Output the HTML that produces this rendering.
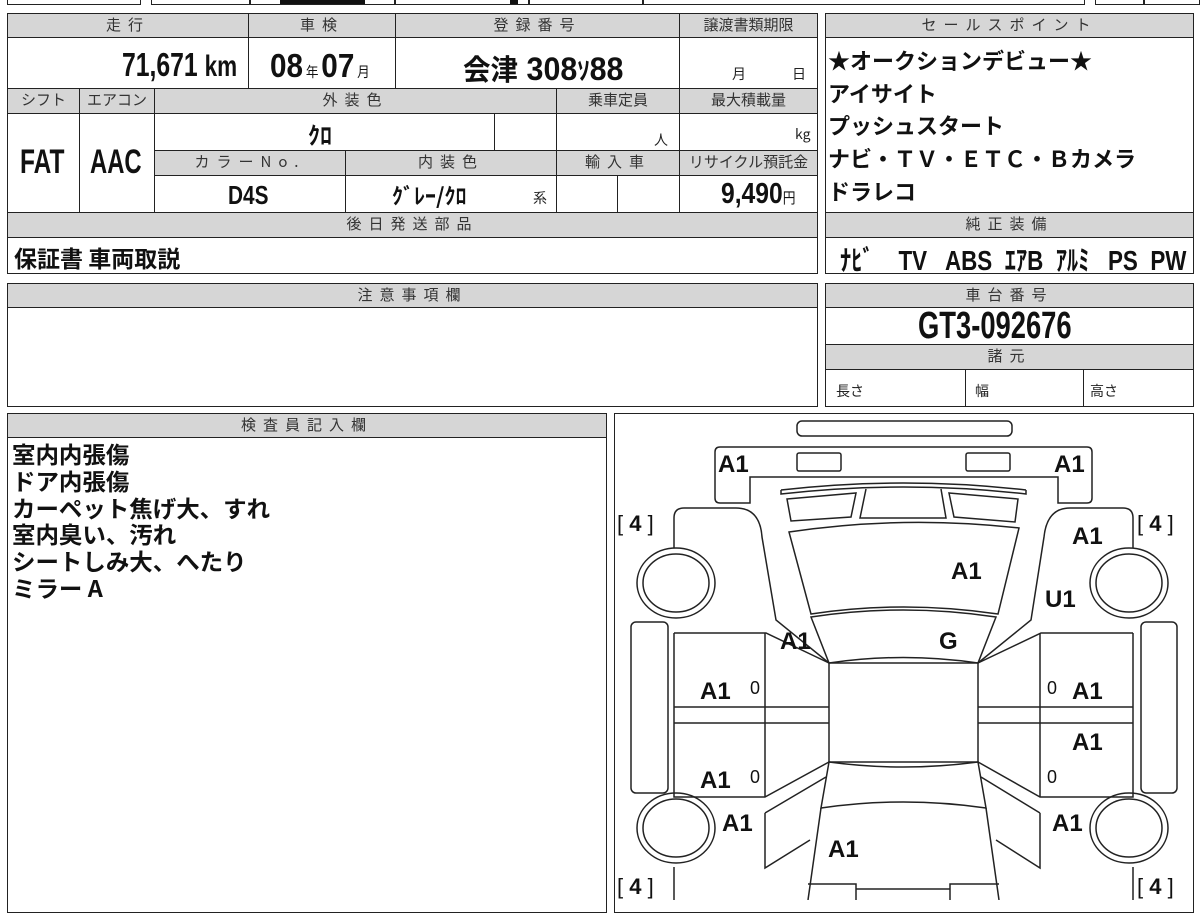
<!DOCTYPE html>
<html><head><meta charset="utf-8"><style>
*{margin:0;padding:0;box-sizing:border-box}
body{width:1200px;height:900px;background:#fff;position:relative;overflow:hidden;font-family:"Liberation Sans","Noto Sans CJK JP",sans-serif;color:#111}
.c{position:absolute;border:1.5px solid #222;}
.h{position:absolute;background:#d6d6d6;border:1.5px solid #222;font-size:15px;color:#333;text-align:center;letter-spacing:7px;line-height:22px;font-family:"Noto Sans CJK JP",sans-serif}
.v{position:absolute;font-weight:bold;font-family:"Liberation Sans","Noto Sans CJK JP",sans-serif;color:#111;white-space:nowrap;transform-origin:left top}
.j{position:absolute;font-weight:bold;font-family:"Noto Sans CJK JP",sans-serif;color:#111}
.s{position:absolute;font-size:14px;font-family:"Noto Sans CJK JP",sans-serif;color:#222}
</style></head><body>
<div class="c" style="left:7px;top:-6px;width:134px;height:11px"></div>
<div class="c" style="left:151px;top:-6px;width:934px;height:11px"></div>
<div style="position:absolute;left:249px;top:0;width:1.5px;height:5px;background:#222"></div>
<div style="position:absolute;left:394px;top:0;width:1.5px;height:5px;background:#222"></div>
<div style="position:absolute;left:528px;top:0;width:1.5px;height:5px;background:#222"></div>
<div style="position:absolute;left:642px;top:0;width:1.5px;height:5px;background:#222"></div>
<div style="position:absolute;left:280px;top:0;width:85px;height:4px;background:#111"></div>
<div style="position:absolute;left:510px;top:0;width:8px;height:4px;background:#111"></div>
<div class="c" style="left:1095px;top:-6px;width:105px;height:11px"></div>
<div style="position:absolute;left:1143px;top:0;width:1.5px;height:5px;background:#222"></div>

<div class="c" style="left:7px;top:13px;width:811px;height:261px"></div>
<div class="h" style="left:7px;top:13px;width:242px;height:25px">走行</div>
<div class="h" style="left:248px;top:13px;width:148px;height:25px">車検</div>
<div class="h" style="left:395px;top:13px;width:285px;height:25px">登録番号</div>
<div class="h" style="left:679px;top:13px;width:139px;height:25px;letter-spacing:0">譲渡書類期限</div>
<div class="c" style="left:248px;top:37px;width:148px;height:52px"></div>
<div class="c" style="left:395px;top:37px;width:285px;height:52px"></div>
<div class="v" style="left:122px;top:46px;font-size:33px;transform:scaleX(0.75)">71,671 <span style="font-size:30px">km</span></div>
<div class="v" style="left:270px;top:47px;font-size:33px;transform:scaleX(0.9)">08<span style="font-size:14px;font-weight:normal;font-family:'Noto Sans CJK JP'"> 年 </span>07<span style="font-size:14px;font-weight:normal;font-family:'Noto Sans CJK JP'"> 月</span></div>
<div class="v" style="left:463px;top:47px;font-size:32px;transform:scaleX(0.95)"><span style="font-size:29px;font-family:'Noto Sans CJK JP'">会津</span> 308<span style="font-size:26px">ｿ</span>88</div>
<div class="s" style="left:732px;top:64px">月</div><div class="s" style="left:792px;top:64px">日</div>

<div class="h" style="left:7px;top:88px;width:73px;height:26px;letter-spacing:0">シフト</div>
<div class="h" style="left:79px;top:88px;width:76px;height:26px;letter-spacing:0">エアコン</div>
<div class="h" style="left:154px;top:88px;width:403px;height:26px">外装色</div>
<div class="h" style="left:556px;top:88px;width:124px;height:26px;letter-spacing:0">乗車定員</div>
<div class="h" style="left:679px;top:88px;width:139px;height:26px;letter-spacing:0">最大積載量</div>
<div class="c" style="left:79px;top:113px;width:76px;height:100px"></div>
<div class="c" style="left:154px;top:113px;width:341px;height:38px"></div>
<div class="c" style="left:494px;top:113px;width:63px;height:38px"></div>
<div class="c" style="left:556px;top:113px;width:124px;height:38px"></div>
<div class="v" style="left:20px;top:143px;font-size:34px;transform:scaleX(0.72)">FAT</div>
<div class="v" style="left:90px;top:143px;font-size:34px;transform:scaleX(0.7)">AAC</div>
<div class="j" style="left:308px;top:116px;font-size:24px">ｸﾛ</div>
<div class="s" style="left:654px;top:130px">人</div>
<div class="s" style="left:795px;top:124px">kg</div>
<div class="h" style="left:154px;top:150px;width:192px;height:26px">カラーNo.</div>
<div class="h" style="left:345px;top:150px;width:212px;height:26px">内装色</div>
<div class="h" style="left:556px;top:150px;width:124px;height:26px">輸入車</div>
<div class="h" style="left:679px;top:150px;width:139px;height:26px;letter-spacing:0">リサイクル預託金</div>
<div class="c" style="left:345px;top:175px;width:212px;height:38px"></div>
<div class="c" style="left:556px;top:175px;width:62px;height:38px"></div>
<div class="c" style="left:617px;top:175px;width:63px;height:38px"></div>
<div class="v" style="left:228px;top:180px;font-size:26px;transform:scaleX(0.8)">D4S</div>
<div class="j" style="left:392px;top:179px;font-size:22px">ｸﾞﾚｰ/ｸﾛ</div>
<div class="s" style="left:533px;top:188px">系</div>
<div class="v" style="left:721px;top:178px;font-size:29px;transform:scaleX(0.85)">9,490<span style="font-size:15px;font-weight:normal;font-family:'Noto Sans CJK JP'">円</span></div>
<div class="h" style="left:7px;top:212px;width:811px;height:26px">後日発送部品</div>
<div class="j" style="left:14px;top:240px;font-size:23px">保証書 車両取説</div>

<div class="c" style="left:825px;top:13px;width:369px;height:261px"></div>
<div class="h" style="left:825px;top:13px;width:369px;height:25px">セールスポイント</div>
<div class="j" style="left:828px;top:44px;font-size:22px;line-height:32.7px">★オークションデビュー★<br>アイサイト<br>プッシュスタート<br>ナビ・ＴＶ・ＥＴＣ・Ｂカメラ<br>ドラレコ</div>
<div class="h" style="left:825px;top:212px;width:369px;height:26px">純正装備</div>
<div class="v" style="left:840px;top:239px;font-size:28px;white-space:pre;transform:scaleX(0.8)">ﾅﾋﾞ    TV   ABS  ｴｱB  ｱﾙﾐ   PS  PW</div>

<div class="c" style="left:7px;top:283px;width:811px;height:124px"></div>
<div class="h" style="left:7px;top:283px;width:811px;height:25px">注意事項欄</div>
<div class="c" style="left:825px;top:283px;width:369px;height:124px"></div>
<div class="h" style="left:825px;top:283px;width:369px;height:25px">車台番号</div>
<div class="v" style="left:918px;top:305px;font-size:38px;transform:scaleX(0.72)">GT3-092676</div>
<div class="h" style="left:825px;top:344px;width:369px;height:26px">諸元</div>
<div class="c" style="left:965px;top:369px;width:119px;height:38px"></div>
<div class="s" style="left:836px;top:381px">長さ</div>
<div class="s" style="left:975px;top:381px">幅</div>
<div class="s" style="left:1090px;top:381px">高さ</div>

<div class="c" style="left:7px;top:413px;width:600px;height:500px"></div>
<div class="h" style="left:7px;top:413px;width:600px;height:25px">検査員記入欄</div>
<div class="j" style="left:12px;top:440px;font-size:23px;line-height:26.8px;transform:scaleX(1.02);transform-origin:left top">室内内張傷<br>ドア内張傷<br>カーペット焦げ大、すれ<br>室内臭い、汚れ<br>シートしみ大、へたり<br>ミラー A</div>

<div class="c" style="left:614px;top:413px;width:580px;height:500px"></div>
<svg style="position:absolute;left:0;top:0" width="1200" height="900" fill="none" stroke="#222" stroke-width="1.5">
<rect x="797" y="421" width="215" height="15" rx="5"/>
<path d="M720,447 H1087 Q1092,447 1092,452 V498 Q1092,503 1087,503 H1058 V477 H750 V503 H720 Q715,503 715,498 V452 Q715,447 720,447 Z"/>
<rect x="797" y="453" width="44" height="18" rx="2"/>
<rect x="966" y="453" width="44" height="18" rx="2"/>
<path d="M781,490 Q903,476 1026,490 M781,490 L781,494 Q903,480 1026,494 L1026,490"/>
<path d="M787,499 L856,493 L851,517 L791,521 Z"/>
<path d="M949,493 L1018,499 L1015,522 L954,517 Z"/>
<path d="M866,489 L860,518 L946,518 L941,489"/>
<path d="M789,532 Q903,515 1019,528 L998,614 Q903,600 811,614 Z"/>
<path d="M811,617 Q903,603 996,617 L978,663 Q903,652 829,663 Z"/>
<rect x="829" y="663" width="149" height="99"/>
<path d="M829,762 Q903,772 978,762 L986,808 Q903,796 821,808 Z"/>
<path d="M821,808 L808,900 M986,808 L999,900"/>
<path d="M674,548 V518 Q674,508 684,508 H736 Q760,508 762,537 L776,620 L829,663"/>
<path d="M674,633 H766 L829,663"/>
<ellipse cx="676" cy="583" rx="39" ry="35"/><ellipse cx="676" cy="583" rx="33" ry="29"/>
<path d="M1133,548 V518 Q1133,508 1123,508 H1070 Q1047,508 1044,537 L1031,620 L978,663"/>
<path d="M1133,633 H1041 L978,663"/>
<ellipse cx="1129" cy="583" rx="39" ry="35"/><ellipse cx="1129" cy="583" rx="33" ry="29"/>
<rect x="631" y="622" width="37" height="171" rx="5"/>
<rect x="1141" y="622" width="36" height="171" rx="5"/>
<path d="M674,633 V797 H765 L829,762 M674,707 H829 M674,723 H829 M765,633 V797"/>
<path d="M765,813 L826,777 M765,813 V868 L810,840 M674,867 V900"/>
<ellipse cx="676" cy="828" rx="39" ry="35"/><ellipse cx="676" cy="828" rx="33" ry="29"/>
<path d="M1133,633 V797 H1040 L978,762 M1133,707 H978 M1133,723 H978 M1040,633 V797"/>
<path d="M1040,813 L981,777 M1040,813 V868 L996,840 M1133,867 V900"/>
<ellipse cx="1129" cy="828" rx="39" ry="35"/><ellipse cx="1129" cy="828" rx="33" ry="29"/>
<path d="M808,884 H856 V900 M856,889 H950 M950,900 V884 H999"/>
</svg>
<div class="v" style="font-size:24px;left:718px;top:451px">A1</div>
<div class="v" style="font-size:24px;left:1054px;top:451px">A1</div>
<div class="v" style="font-size:22px;left:617px;top:511px;font-weight:normal;white-space:pre">[ <b>4</b> ]</div>
<div class="v" style="font-size:22px;left:1137px;top:511px;font-weight:normal;white-space:pre">[ <b>4</b> ]</div>
<div class="v" style="font-size:24px;left:1072px;top:523px">A1</div>
<div class="v" style="font-size:24px;left:951px;top:558px">A1</div>
<div class="v" style="font-size:24px;left:1045px;top:586px">U1</div>
<div class="v" style="font-size:24px;left:780px;top:628px">A1</div>
<div class="v" style="font-size:24px;left:939px;top:628px">G</div>
<div class="v" style="font-size:24px;left:700px;top:678px">A1</div>
<div class="v" style="font-size:18px;left:750px;top:678px;font-weight:normal">0</div>
<div class="v" style="font-size:18px;left:1047px;top:678px;font-weight:normal">0</div>
<div class="v" style="font-size:24px;left:1072px;top:678px">A1</div>
<div class="v" style="font-size:24px;left:1072px;top:729px">A1</div>
<div class="v" style="font-size:24px;left:700px;top:767px">A1</div>
<div class="v" style="font-size:18px;left:750px;top:767px;font-weight:normal">0</div>
<div class="v" style="font-size:18px;left:1047px;top:767px;font-weight:normal">0</div>
<div class="v" style="font-size:24px;left:722px;top:810px">A1</div>
<div class="v" style="font-size:24px;left:1052px;top:810px">A1</div>
<div class="v" style="font-size:24px;left:828px;top:836px">A1</div>
<div class="v" style="font-size:22px;left:617px;top:874px;font-weight:normal;white-space:pre">[ <b>4</b> ]</div>
<div class="v" style="font-size:22px;left:1137px;top:874px;font-weight:normal;white-space:pre">[ <b>4</b> ]</div>
</body></html>
